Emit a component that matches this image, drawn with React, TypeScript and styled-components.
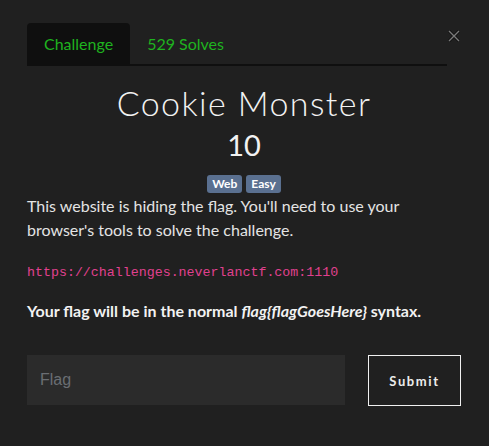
import React, { useState } from 'react'
import styled, { createGlobalStyle } from 'styled-components'

//^ GLOBAL
const GlobalStyle = createGlobalStyle`
  html, body { margin: 0; padding: 0; background: #202020; }
  body { font-family: Lato, "Noto Sans", sans-serif; color: #e4e4e4; }
  * { box-sizing: border-box; }
`

//^ STYLED COMPONENTS
const Modal = styled.section`width: 489px; height: 446px; padding: 23px 28px 0 27px; background: #202020;`

const HeaderRow = styled.div`display: flex; align-items: flex-start;`

const TabNav = styled.nav`flex: 1; display: flex; border-bottom: 2px solid #0f0f0f;`

const Tab = styled.button<{ $active?: boolean }>`
  height: 41px; padding: 0 17px; border: none; border-radius: 4px 4px 0 0;
  font-family: Lato, sans-serif; font-size: 16px; color: #1fb31f; cursor: pointer;
  background: ${p => (p.$active ? '#0f0f0f' : 'transparent')};
`

const CloseButton = styled.button`width: 14px; height: 14px; margin: 6px 0 0 0; padding: 0; border: none; background: none; cursor: pointer; display: flex; align-items: center; justify-content: center;`

const Title = styled.h1`margin: 17px 0 0; font-weight: 300; font-size: 34px; line-height: 40px; letter-spacing: 1.4px; text-align: center; color: #f2f2f2;`

const Points = styled.h2`margin: 4px 0 0; font-weight: 400; font-size: 29px; line-height: 36px; text-align: center; color: #f2f2f2;`

const TagRow = styled.div`display: flex; justify-content: center; gap: 4px; margin-top: 12px;`

const Tag = styled.span`height: 18px; padding: 0 5px; border-radius: 3px; background: #5a7090; color: #fff; font-size: 12px; font-weight: 700; line-height: 18px;`

const Description = styled.p`margin: 1px 0 0; font-size: 16px; line-height: 24px; color: #e4e4e4;`

const Link = styled.code`display: block; margin-top: 21px; font-family: "Liberation Mono", monospace; font-size: 13.3px; line-height: 20px; color: #e0408f;`

const Note = styled.p`margin: 16px 0 0; font-size: 16px; font-weight: 700; line-height: 24px; color: #f2f2f2;`

const FormRow = styled.form`display: flex; gap: 23px; margin-top: 32px;`

const FlagInput = styled.input`
  width: 318px; height: 50px; padding: 0 13px; border: none; outline: none; background: #2b2b2b;
  font-family: "Liberation Sans", Arial, sans-serif; font-size: 16px; color: #e4e4e4;
  &::placeholder { color: #6a6e73; }
`

const SubmitButton = styled.button`
  width: 93px; height: 51px; border: 1px solid #f0f0f0; background: transparent; cursor: pointer;
  font-family: Lato, sans-serif; font-size: 13px; font-weight: 700; letter-spacing: 1.6px; color: #ececec;
`

//^ COMPONENT
const App = () => {
  const [tab, setTab] = useState('challenge')
  const [flag, setFlag] = useState('')

  return (
    <>
      <GlobalStyle />
      <Modal>
        <HeaderRow>
          <TabNav>
            <Tab $active={tab === 'challenge'} onClick={() => setTab('challenge')}>Challenge</Tab>
            <Tab $active={tab === 'solves'} onClick={() => setTab('solves')}>529 Solves</Tab>
          </TabNav>
          <CloseButton aria-label="Close">
            <svg width="12" height="12" viewBox="0 0 12 12">
              <path d="M1 1 L11 11 M11 1 L1 11" stroke="#000" strokeWidth="3" opacity="0.5" />
              <path d="M1 1 L11 11 M11 1 L1 11" stroke="#7a7a7a" strokeWidth="1.4" />
            </svg>
          </CloseButton>
        </HeaderRow>

        <Title>Cookie Monster</Title>
        <Points>10</Points>
        <TagRow>
          <Tag>Web</Tag>
          <Tag>Easy</Tag>
        </TagRow>

        <Description>This website is hiding the flag. You'll need to use your browser's tools to solve the challenge.</Description>
        <Link>https://challenges.neverlanctf.com:1110</Link>
        <Note>Your flag will be in the normal <i>flag{'{'}flagGoesHere{'}'}</i> syntax.</Note>

        <FormRow onSubmit={e => e.preventDefault()}>
          <FlagInput placeholder="Flag" value={flag} onChange={e => setFlag(e.target.value)} />
          <SubmitButton type="submit">Submit</SubmitButton>
        </FormRow>
      </Modal>
    </>
  )
}

export default App
